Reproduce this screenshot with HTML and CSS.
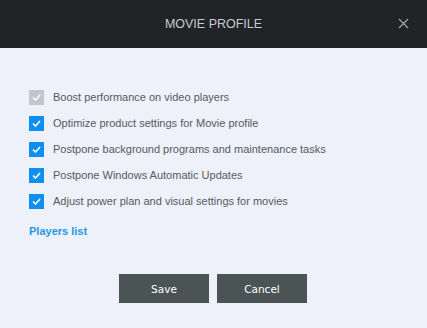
FILE: index.html
```html
<!DOCTYPE html>
<html>
<head>
<meta name="viewport" content="width=device-width, initial-scale=1">
<title>Movie Profile</title>
<link rel="stylesheet" href="styles.css">
</head>
<body>
  <div class="dialog">
    <div class="header">
      <span class="title">MOVIE PROFILE</span>
      <span class="close">
        <svg width="11" height="11" viewBox="0 0 11 11"><path d="M1 1L10 10M10 1L1 10" stroke="#9a9ea0" stroke-width="1.4"/></svg>
      </span>
    </div>
    <div class="content">
      <ul class="options">
        <li><span class="check disabled"><svg width="9" height="7" viewBox="0 0 9 7"><path d="M1 3.5L3.5 6L8 1" fill="none" stroke="#fff" stroke-width="1.6"/></svg></span>Boost performance on video players</li>
        <li><span class="check"><svg width="9" height="7" viewBox="0 0 9 7"><path d="M1 3.5L3.5 6L8 1" fill="none" stroke="#fff" stroke-width="1.6"/></svg></span>Optimize product settings for Movie profile</li>
        <li><span class="check"><svg width="9" height="7" viewBox="0 0 9 7"><path d="M1 3.5L3.5 6L8 1" fill="none" stroke="#fff" stroke-width="1.6"/></svg></span>Postpone background programs and maintenance tasks</li>
        <li><span class="check"><svg width="9" height="7" viewBox="0 0 9 7"><path d="M1 3.5L3.5 6L8 1" fill="none" stroke="#fff" stroke-width="1.6"/></svg></span>Postpone Windows Automatic Updates</li>
        <li><span class="check"><svg width="9" height="7" viewBox="0 0 9 7"><path d="M1 3.5L3.5 6L8 1" fill="none" stroke="#fff" stroke-width="1.6"/></svg></span>Adjust power plan and visual settings for movies</li>
      </ul>
      <a class="players" href="#">Players list</a>
      <div class="buttons">
        <button type="button">Save</button>
        <button type="button">Cancel</button>
      </div>
    </div>
  </div>
</body>
</html>
```
FILE: styles.css
```css
body {
  margin: 0;
  font-family: "Liberation Sans", Arial, sans-serif;
  background-color: #eef0fa;
}

.dialog {
  width: 427px;
  height: 328px;
  display: flex;
  flex-direction: column;
}

.header {
  height: 48px;
  background-color: #202426;
  display: flex;
  align-items: center;
  justify-content: center;
  position: relative;
}

.title {
  color: #c8cccd;
  font-size: 12.5px;
}

.close {
  position: absolute;
  right: 18px;
  top: 18px;
  width: 11px;
  height: 11px;
  display: flex;
}

.content {
  padding: 36px 0 0 29px;
}

.options {
  list-style: none;
  margin: 0;
  padding: 0;
}

.options li {
  display: flex;
  align-items: center;
  height: 26px;
  color: #555b60;
  font-size: 11px;
}

.check {
  width: 15px;
  height: 15px;
  background-color: #0f8ff0;
  display: flex;
  align-items: center;
  justify-content: center;
  margin-right: 9px;
}

.check.disabled {
  background-color: #c3c5cb;
}

.players {
  display: block;
  margin-top: 11px;
  color: #1f9ae3;
  font-weight: bold;
  font-size: 11px;
  text-decoration: none;
}

.buttons {
  display: flex;
  gap: 8px;
  margin: 37px 0 0 90px;
}

.buttons button {
  width: 90px;
  height: 29px;
  border: none;
  background-color: #4b5454;
  color: #ffffff;
  font-family: "DejaVu Sans", Verdana, sans-serif;
  font-size: 10.5px;
  cursor: pointer;
}
```
